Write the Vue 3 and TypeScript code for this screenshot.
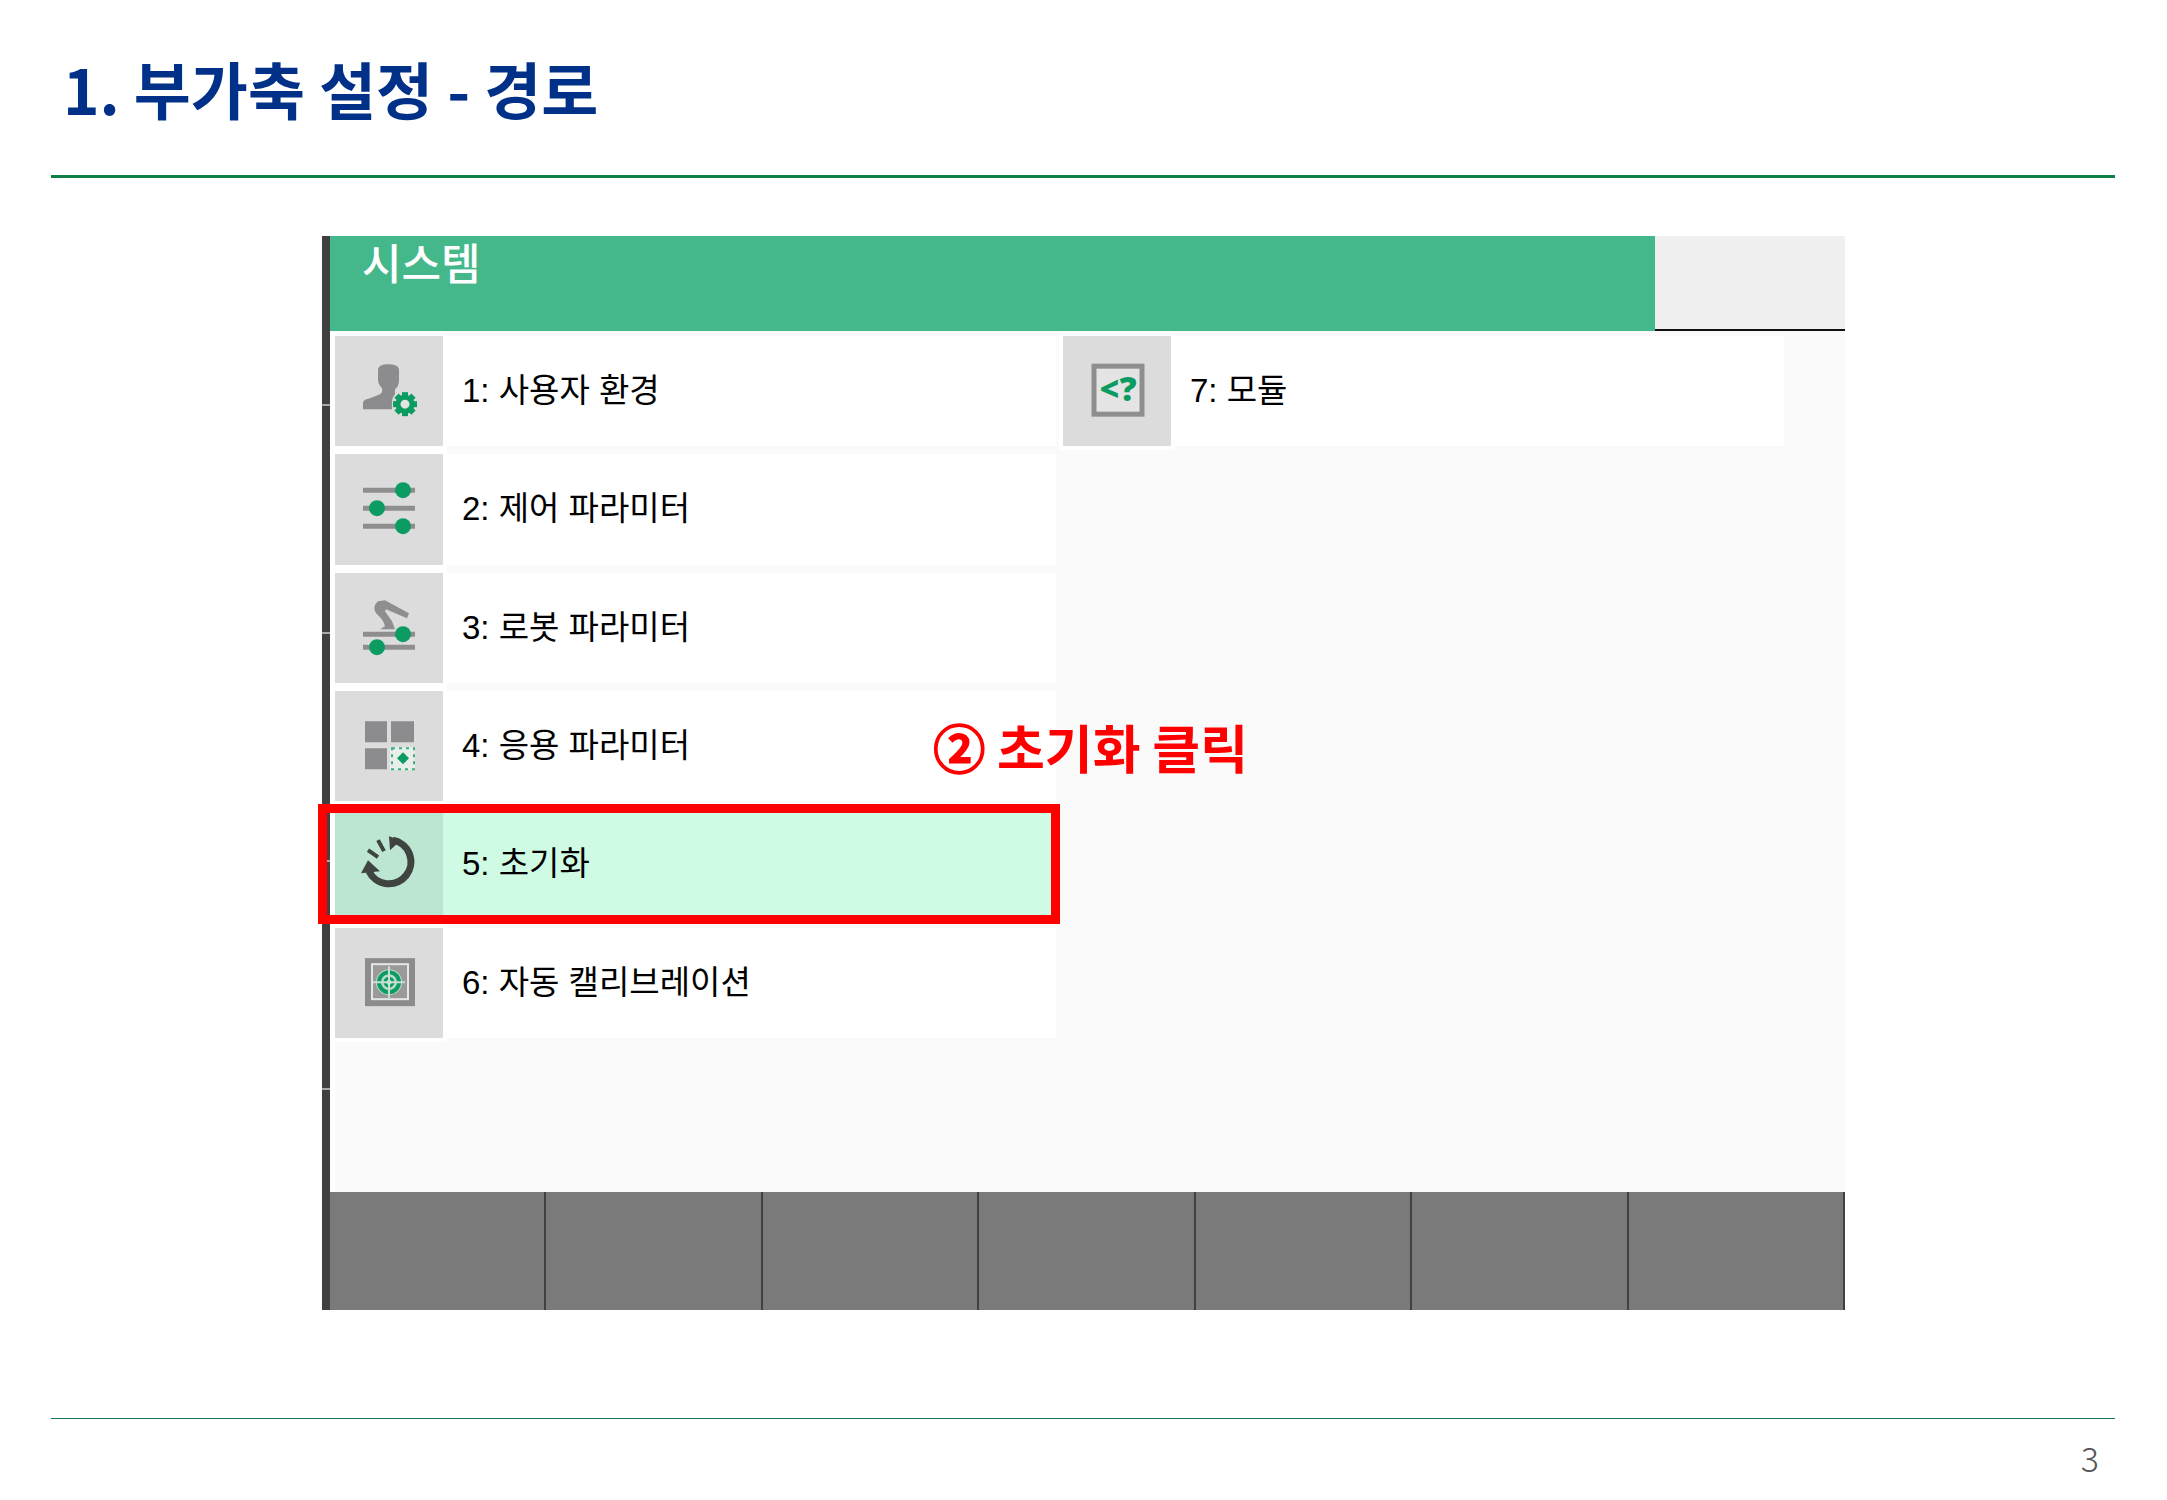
<script setup lang="ts">
interface MenuItem {
  id: number
  label: string
  icon: 'user' | 'sliders' | 'robot' | 'apps' | 'reset' | 'target' | 'module'
}

const items: MenuItem[] = [
  { id: 1, label: '사용자 환경', icon: 'user' },
  { id: 2, label: '제어 파라미터', icon: 'sliders' },
  { id: 3, label: '로봇 파라미터', icon: 'robot' },
  { id: 4, label: '응용 파라미터', icon: 'apps' },
  { id: 5, label: '초기화', icon: 'reset' },
  { id: 6, label: '자동 캘리브레이션', icon: 'target' },
  { id: 7, label: '모듈', icon: 'module' },
]

const selectedId = 5
const gearAngles = [0, 45, 90, 135]
</script>

<template>
  <div class="slide">
    <header class="slide-header">
      <h1>1. 부가축 설정 - 경로</h1>
    </header>

    <main class="slide-main">
      <section class="panel">
        <div class="panel-top">
          <h2>시스템</h2>
          <div class="status"></div>
        </div>

        <ul class="menu">
          <li v-for="item in items" :key="item.id" :class="{ selected: item.id === selectedId }">
            <button type="button" class="entry">
              <svg class="icon" viewBox="0 0 108 110" aria-hidden="true">
                <g v-if="item.icon === 'user'">
                  <path
                    fill="#8c8c8f"
                    d="M43 33Q44 28 53 28Q63 28 64 33L64 44Q64 50 60 53L60 58Q56 62 57 73L28 73L28 66Q29 63 35 62L45 58Q48 56 47 52Q43 48 43 43Z"
                  />
                  <circle cx="70" cy="68" r="13" fill="#dcdcdc" />
                  <g stroke="#0c9c62" stroke-width="6">
                    <path
                      v-for="angle in gearAngles"
                      :key="angle"
                      d="M70 56V80"
                      :transform="`rotate(${angle} 70 68)`"
                    />
                  </g>
                  <circle cx="70" cy="68" r="7" fill="#e4e4e4" stroke="#0c9c62" stroke-width="5" />
                </g>
                <g v-else-if="item.icon === 'sliders'">
                  <path d="M28 36H80M28 54H80M28 72H80" stroke="#8e8e8e" stroke-width="5" />
                  <g fill="#0c9c62">
                    <circle cx="68" cy="36" r="8" />
                    <circle cx="42" cy="54" r="8" />
                    <circle cx="68" cy="72" r="8" />
                  </g>
                </g>
                <g v-else-if="item.icon === 'robot'">
                  <path
                    fill="#8e8e8e"
                    d="M43 28L50 27L74 40L72 45L51 36L50 38L57 48L60 56L45 56L50 53Q49 47 41 40Q37 33 43 28Z"
                  />
                  <path d="M28 61H80M28 74H80" stroke="#8e8e8e" stroke-width="5" />
                  <g fill="#0c9c62">
                    <circle cx="68" cy="61" r="8" />
                    <circle cx="42" cy="74" r="8" />
                  </g>
                </g>
                <g v-else-if="item.icon === 'apps'">
                  <path fill="#8c8c8f" d="M30 30h22v21h-22zM56 30h23v21h-23zM30 57h22v21h-22z" />
                  <rect x="55" y="56" width="25" height="23" fill="#e8eeea" />
                  <rect
                    x="57"
                    y="57"
                    width="22"
                    height="21"
                    fill="none"
                    stroke="#3fae7e"
                    stroke-width="2"
                    stroke-dasharray="3 4"
                  />
                  <path d="M68 61L71 64L74 67L71 70L68 73L65 70L62 67L65 64Z" fill="#0c9c62" />
                </g>
                <g v-else-if="item.icon === 'reset'">
                  <path d="M58 31A22 22 0 1 1 34 62" fill="none" stroke="#3f4441" stroke-width="7" />
                  <path d="M54 27L66 31L55 41Z" fill="#3f4441" />
                  <path d="M33 51L26 64L45 62Z" fill="#3f4441" />
                  <path d="M43 31L49 42M33 41L43 48" stroke="#3f4441" stroke-width="4" />
                </g>
                <g v-else-if="item.icon === 'target'">
                  <rect x="30" y="30" width="50" height="48" fill="#8c8c8c" />
                  <rect x="37" y="36" width="36" height="35" fill="#9a9a9a" stroke="#e6e6e6" stroke-width="2" />
                  <circle cx="54" cy="54" r="13" fill="#b9dccb" />
                  <circle cx="54" cy="54" r="10" fill="none" stroke="#0c9c62" stroke-width="4" />
                  <circle cx="54" cy="54" r="4" fill="none" stroke="#0c9c62" stroke-width="3" />
                  <path d="M54 38V70M38 54H70" stroke="#c9ddd2" stroke-width="2" />
                </g>
                <g v-else>
                  <rect x="31" y="30" width="48" height="48" fill="#e4e4e4" stroke="#8e8e8e" stroke-width="5" />
                  <text x="55" y="65" text-anchor="middle" class="code">&lt;?</text>
                </g>
              </svg>
              <span class="label">{{ item.id }}: {{ item.label }}</span>
            </button>
            <p v-if="item.id === selectedId" class="callout"><span class="step">②</span> 초기화 클릭</p>
          </li>
        </ul>

        <div class="softkeys">
          <button v-for="n in 7" :key="n" type="button" :aria-label="`F${n}`"></button>
        </div>
      </section>
    </main>

    <footer class="slide-footer">3</footer>
  </div>
</template>

<style>
body {
  margin: 0;
  background: #fff;
}
</style>

<style scoped>
.slide {
  display: flex;
  flex-direction: column;
  min-height: 100vh;
  box-sizing: border-box;
  padding: 0 52px 0 51px;
  font-family: 'Noto Sans CJK KR', sans-serif;
}

.slide-header {
  display: flex;
  align-items: center;
  height: 175px;
  border-bottom: 3px solid #0e8045;
}

h1 {
  margin: 0;
  padding: 0 12px;
  font-size: 62px;
  line-height: 80px;
  font-weight: 700;
  color: #003087;
}

.slide-main {
  flex: 1;
  padding: 58px 270px 0 271px;
}

.panel {
  border-left: 8px solid #404040;
  position: relative;
}

/* Notches on the dark edge */
.panel::before {
  content: '';
  position: absolute;
  top: 0;
  bottom: 0;
  left: -8px;
  width: 8px;
  background: linear-gradient(#a8a8a8 2px, transparent 2px) 0 168px / 8px 228px;
}

.panel-top {
  display: flex;
  height: 95px;
}

h2 {
  flex: 1;
  margin: 0;
  padding: 0 32px;
  font-size: 43px;
  line-height: 50px;
  font-weight: 500;
  color: #fff;
  background: #44b78b;
}

.status {
  box-sizing: border-box;
  width: 190px;
  background: #f0f0f0;
  border-bottom: 2px solid #111;
}

.menu {
  display: grid;
  grid-template-columns: 1fr 1fr;
  grid-template-rows: repeat(6, 1fr);
  grid-auto-flow: column;
  gap: 8px 7px;
  box-sizing: border-box;
  height: 861px;
  margin: 0;
  padding: 5px 61px 154px 0;
  border-left: 5px solid #fff;
  list-style: none;
  background: #fafafa;
}

.menu li {
  position: relative;
}

.entry {
  display: flex;
  align-items: center;
  width: 100%;
  height: 100%;
  padding: 0;
  border: 0;
  background: #fff;
  text-align: left;
}

.icon {
  width: 108px;
  height: 100%;
  background: #dcdcdc;
  box-shadow: 0 0 0 4px #fff;
}

.code {
  font: 800 34px 'Open Sans', sans-serif;
  fill: #0c9c62;
}

.label {
  padding-left: 19px;
  font-family: 'Liberation Sans', 'Noto Sans CJK KR', sans-serif;
  font-size: 33px;
  line-height: 48px;
  font-weight: 400;
  color: #000;
}

.selected .entry {
  background: #cffae4;
}

.selected .icon {
  background: #bce6d1;
  box-shadow: none;
}

.selected::after {
  content: '';
  position: absolute;
  inset: -5px -4px -4px -17px;
  border: 9px solid #f00;
}

.callout {
  position: absolute;
  right: -192px;
  bottom: 100%;
  z-index: 1;
  margin: 0 0 24px;
  font-size: 52px;
  line-height: 76px;
  font-weight: 700;
  white-space: nowrap;
  color: #f00;
}

.step {
  font-weight: 500;
  -webkit-text-stroke: 2px #f00;
}

.softkeys {
  display: grid;
  grid-template-columns: repeat(7, 1fr);
  height: 118px;
}

.softkeys button {
  padding: 0;
  border: 0;
  border-right: 2px solid #404040;
  background: #7a7a7a;
}

.slide-footer {
  height: 81px;
  padding-right: 16px;
  border-top: 1px solid #1b7a55;
  font-size: 34px;
  line-height: 78px;
  font-weight: 300;
  text-align: right;
  color: #555;
}
</style>
